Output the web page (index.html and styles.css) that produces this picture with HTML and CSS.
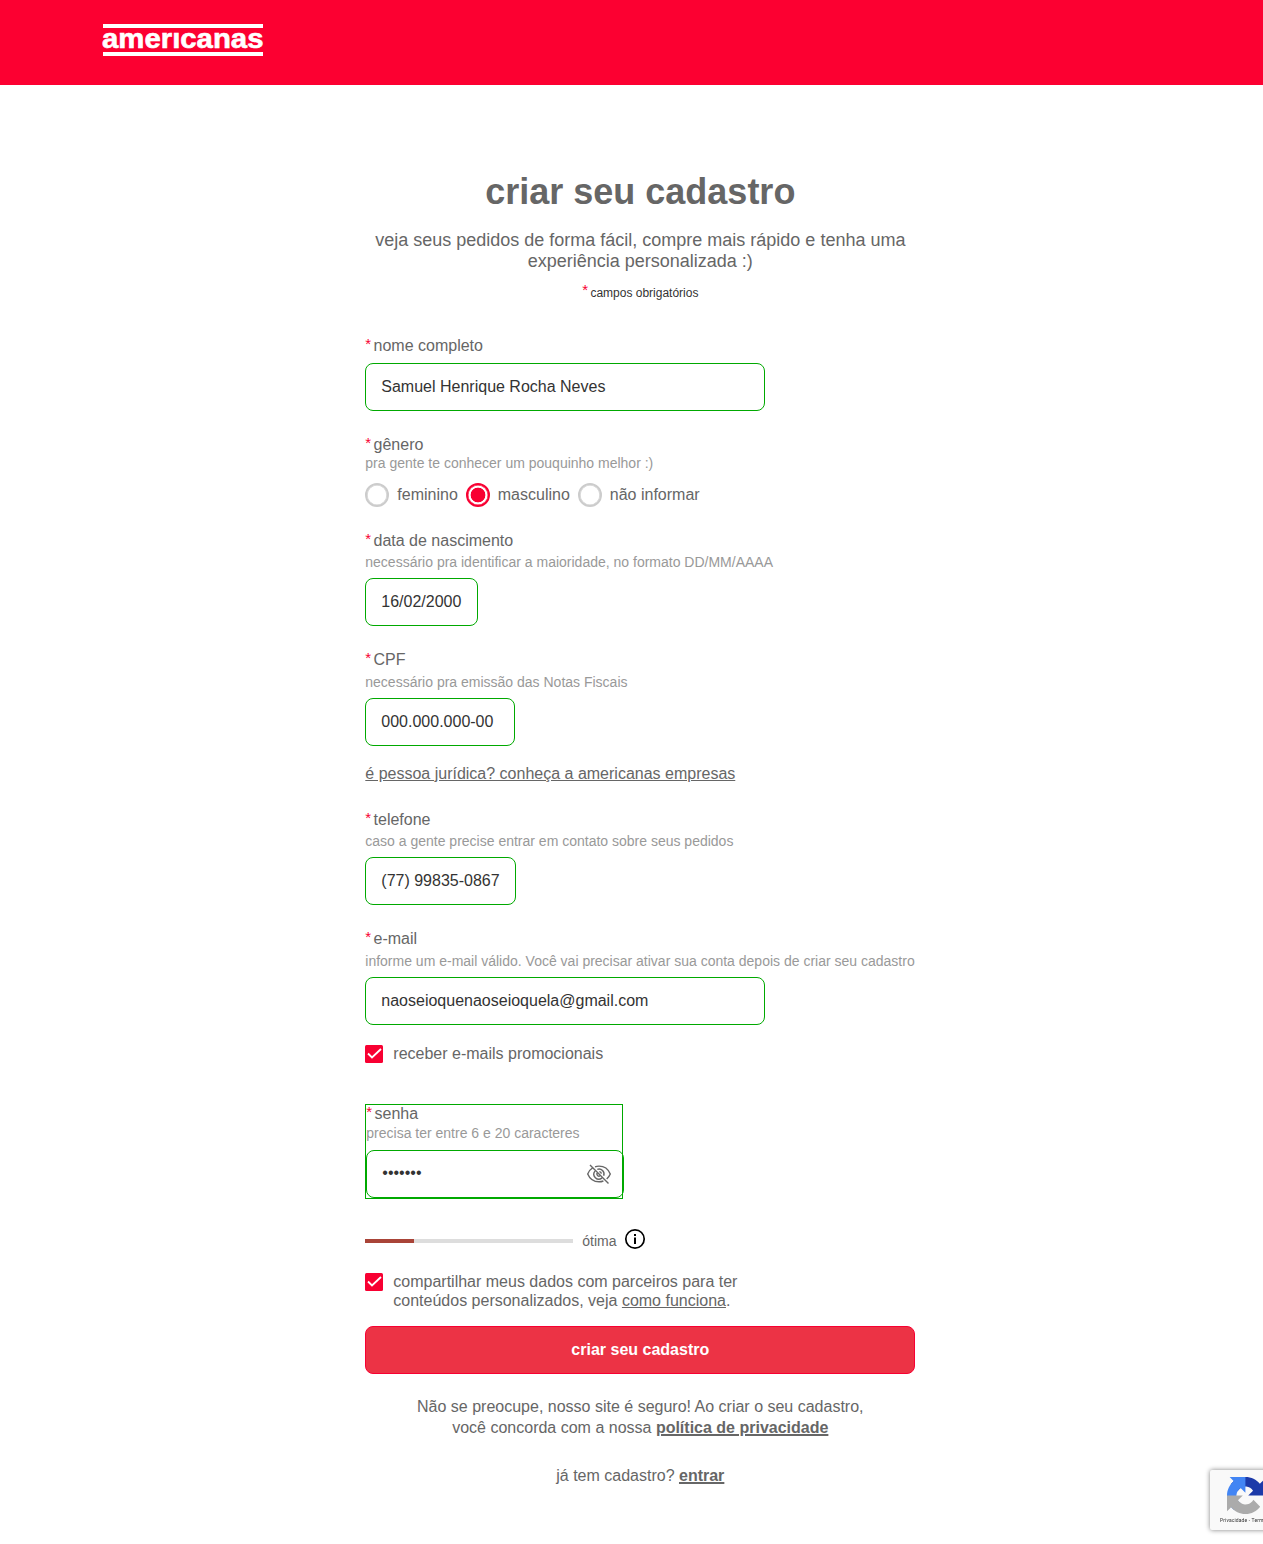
FILE: index.html
```html
<!DOCTYPE html>
<html lang="pt-BR">
<head>
<meta charset="utf-8">
<title>criar seu cadastro</title>
<link rel="stylesheet" href="styles.css">
</head>
<body>
<header class="header">
  <svg class="logo" width="164" height="32" viewBox="0 0 164 32">
    <path fill="#fff" d="M2 0h160v4H2zM2 28h160v4H2z"/>
    <text x="1" y="24.300" textLength="161.500" lengthAdjust="spacingAndGlyphs">amerıcanas</text>
  </svg>
</header>
<main class="main">
  <h1 class="title">criar seu cadastro</h1>
  <p class="lead">veja seus pedidos de forma fácil, compre mais rápido e tenha uma experiência personalizada :)</p>
  <p class="required-note"><span class="star">*</span><small>campos obrigatórios</small></p>
  <form class="form">
    <div class="field">
      <label class="label"><span class="star">*</span>nome completo</label>
      <input class="input w-full" type="text" value="Samuel Henrique Rocha Neves">
    </div>
    <div class="field">
      <div class="label"><span class="star">*</span>gênero</div>
      <div class="hint hint-gender">pra gente te conhecer um pouquinho melhor :)</div>
      <div class="radios">
        <label class="radio"><span class="dot"></span>feminino</label>
        <label class="radio"><span class="dot dot-on"></span>masculino</label>
        <label class="radio"><span class="dot"></span>não informar</label>
      </div>
    </div>
    <div class="field">
      <label class="label"><span class="star">*</span>data de nascimento</label>
      <div class="hint">necessário pra identificar a maioridade, no formato DD/MM/AAAA</div>
      <input class="input w-date" type="text" value="16/02/2000">
    </div>
    <div class="field">
      <label class="label"><span class="star">*</span>CPF</label>
      <div class="hint hint-low">necessário pra emissão das Notas Fiscais</div>
      <input class="input w-cpf" type="text" value="000.000.000-00">
    </div>
    <a class="company">é pessoa jurídica? conheça a americanas empresas</a>
    <div class="field field-phone">
      <label class="label"><span class="star">*</span>telefone</label>
      <div class="hint">caso a gente precise entrar em contato sobre seus pedidos</div>
      <input class="input w-phone" type="text" value="(77) 99835-0867">
    </div>
    <div class="field">
      <label class="label"><span class="star">*</span>e-mail</label>
      <div class="hint hint-low">informe um e-mail válido. Você vai precisar ativar sua conta depois de criar seu cadastro</div>
      <input class="input w-full" type="text" value="naoseioquenaoseioquela@gmail.com">
    </div>
    <label class="check check-promo">
      <svg class="box" width="18" height="18" viewBox="0 0 18 18"><rect width="18" height="18" rx="1.500" fill="#f80032"/><path d="M3 8.500l4 4 9-8.500" fill="none" stroke="#fff" stroke-width="1.800"/></svg>
      <span>receber e-mails promocionais</span>
    </label>
    <div class="password">
      <label class="label"><span class="star">*</span>senha</label>
      <div class="hint hint-password">precisa ter entre 6 e 20 caracteres</div>
      <div class="password-box">
        <input class="secret" type="password" value="1234567">
        <svg width="26" height="22" viewBox="0 0 26 22" fill="none" stroke="#666" stroke-width="1.400">
          <path d="M7 4.500C4.600 6 2.800 8.300 1.700 11c2 4.800 6.400 7.800 11.300 7.800 1.500 0 3-.3 4.400-.8M9 3.800c1.300-.5 2.600-.7 4-.7 4.900 0 9.300 3 11.300 7.900-.8 1.900-2 3.600-3.600 5"/>
          <path d="M8.900 8.100a5 5 0 0 0 7 7M11.300 6.300a5 5 0 0 1 6.400 6.400M10.900 10.200a2.400 2.400 0 0 0 2.900 2.900M13.300 8.600a2.400 2.400 0 0 1 2.100 2.100M4 2l18.500 18.500"/>
        </svg>
      </div>
    </div>
    <div class="strength">
      <div class="bar"><div class="bar-fill"></div></div>
      <span class="rating">ótima</span>
      <svg width="22" height="22" viewBox="0 0 22 22"><circle cx="11" cy="11" r="9.200" fill="none" stroke="#000" stroke-width="1.700"/><path d="M10 6h2v2h-2zM10 9.500h2V16h-2z"/></svg>
    </div>
    <label class="check check-share">
      <svg class="box" width="18" height="18" viewBox="0 0 18 18"><rect width="18" height="18" rx="1.500" fill="#f80032"/><path d="M3 8.500l4 4 9-8.500" fill="none" stroke="#fff" stroke-width="1.800"/></svg>
      <span class="share-text">compartilhar meus dados com parceiros para ter<br>conteúdos personalizados, veja <u>como funciona</u>.</span>
    </label>
    <button class="submit" type="button">criar seu cadastro</button>
  </form>
  <p class="terms">Não se preocupe, nosso site é seguro! Ao criar o seu cadastro,<br>você concorda com a nossa <a class="strong-link">política de privacidade</a></p>
  <p class="login">já tem cadastro? <a class="strong-link">entrar</a></p>
</main>
<aside class="captcha">
  <svg width="37" height="37" viewBox="0 0 64 64">
    <path fill="#1c3aa9" d="M64 31.955l-.033-1.370V4.687l-7.160 7.160C50.948 4.674 42.033.093 32.050.093c-10.400 0-19.622 4.960-25.458 12.640l11.736 11.860a15.550 15.550 0 0 1 4.754-5.334c2.050-1.600 4.952-2.906 8.968-2.906.485 0 .860.057 1.135.163 4.976.393 9.288 3.140 11.828 7.124l-8.307 8.307L64 31.953"/>
    <path fill="#4285f4" d="M31.862.094l-1.370.033H4.594l7.160 7.160C4.580 13.147 0 22.060 0 32.046c0 10.400 4.960 19.622 12.640 25.458L24.500 45.768a15.550 15.550 0 0 1-5.334-4.754c-1.600-2.050-2.906-4.952-2.906-8.968 0-.485.057-.860.163-1.135.393-4.976 3.140-9.288 7.124-11.828l8.307 8.307L31.860.095"/>
    <path fill="#ababab" d="M.001 32.045l.033 1.370v25.898l7.160-7.160c5.860 7.173 14.774 11.754 24.760 11.754 10.400 0 19.622-4.960 25.458-12.640l-11.736-11.860a15.550 15.550 0 0 1-4.754 5.334c-2.050 1.600-4.952 2.906-8.968 2.906-.485 0-.860-.057-1.135-.163-4.976-.393-9.288-3.140-11.828-7.124l8.307-8.307c-10.522.040-22.400.066-27.295-.005"/>
  </svg>
  <span>Privacidade&nbsp;-&nbsp;Termos</span>
</aside>
</body>
</html>
```
FILE: styles.css
```css
* { box-sizing: border-box; }
body {
  margin: 0;
  height: 1544px;
  overflow: hidden;
  background: #fff;
  color: #666;
  font: 16px/18px "Liberation Sans", Arial, sans-serif;
}
h1, p { margin: 0; }
.header {
  height: 85px;
  padding: 24px 0 0 101px;
  background: #fc0031;
}
.logo { display: block; }
.logo text {
  fill: #fff;
  stroke: #fff;
  stroke-width: 0.6px;
  font-size: 28px;
  font-weight: bold;
}
.main {
  width: 550px;
  margin-left: 365.3px;
  padding-top: 86px;
}
.title {
  font-size: 36px;
  line-height: 42px;
  text-align: center;
}
.lead {
  margin-top: 17px;
  font-size: 18px;
  line-height: 21px;
  text-align: center;
}
.required-note {
  height: 18px;
  margin-top: 11px;
  color: #333;
  text-align: center;
}
.required-note small { font-size: 12px; }
.form { margin-top: 36px; }
.star {
  margin-right: 2.400px;
  color: #f80032;
  font-size: 15px;
  line-height: 12px;
  vertical-align: 2px;
}
.field + .field { margin-top: 25px; }
.label {
  display: block;
  height: 18px;
}
.hint {
  margin: 4px 0 8px;
  color: #999;
  font-size: 14px;
  line-height: 16px;
  white-space: nowrap;
}
.hint-gender { margin: 1px 0 12px; }
.hint-low { margin-top: 5px; }
.input {
  display: block;
  height: 48px;
  padding: 0 15px 1px;
  border: 1px solid #00a900;
  border-radius: 8px;
  background: #fff;
  color: #333;
  font: inherit;
}
.label + .input { margin-top: 8px; }
.w-full { width: 400px; }
.w-date { width: 113px; }
.w-cpf { width: 150px; }
.w-phone { width: 151px; }
.radios { display: flex; gap: 8px; }
.radio {
  display: flex;
  gap: 8px;
  height: 24px;
  line-height: 23px;
}
.dot {
  width: 24px;
  height: 24px;
  border: 2px solid #ccc;
  border-radius: 50%;
  box-shadow: inset 0 0 0 0.600px #ccc;
}
.dot-on {
  border-color: #f80032;
  background: radial-gradient(circle, #f80032 7px, #fff 7.700px);
  box-shadow: inset 0 0 0 0.400px #f80032;
}
.company {
  display: block;
  margin-top: 19px;
  text-decoration: underline;
}
.field-phone { margin-top: 28px; }
.check {
  display: flex;
  gap: 10px;
}
.box { flex: none; }
.check-promo { margin-top: 20px; }
.password {
  width: 258px;
  height: 95px;
  margin-top: 41px;
  border: 1px solid #00a900;
}
.hint-password { margin: 2px 0 9px; }
.password-box {
  display: flex;
  align-items: center;
  width: 258px;
  height: 48px;
  padding: 0 11px 0 15px;
  border: 1px solid #00a900;
  border-radius: 8px;
}
.secret {
  flex: 1;
  min-width: 0;
  padding: 0 0 2px;
  border: 0;
  background: none;
  color: #333;
  font: inherit;
}
.strength {
  display: flex;
  align-items: center;
  height: 22px;
  margin-top: 29px;
}
.bar {
  width: 208px;
  height: 4px;
  margin: 4px 9px 0 0;
  background: #ddd;
}
.bar-fill {
  width: 49px;
  height: 4px;
  background: #a94438;
}
.rating {
  width: 42px;
  margin-top: 4px;
  font-size: 14px;
  line-height: 16px;
}
.check-share {
  height: 38px;
  margin-top: 23px;
  line-height: 19px;
}
.share-text { margin-top: -1px; }
.submit {
  display: block;
  width: 550px;
  height: 48px;
  margin-top: 15px;
  padding: 0 0 1px;
  border: 1px solid #f80032;
  border-radius: 8px;
  background: #ec3345;
  color: #fff;
  font: bold 16px/18px "Liberation Sans", Arial, sans-serif;
}
.terms {
  margin-top: 22px;
  line-height: 21px;
  text-align: center;
}
.strong-link {
  font-weight: bold;
  text-decoration: underline 2px;
}
.login {
  margin-top: 29px;
  text-align: center;
}
.captcha {
  position: fixed;
  top: 1470px;
  left: 1210px;
  width: 70px;
  height: 60px;
  padding: 7px 0 0 10px;
  border-radius: 2px;
  background: #f9f9f9;
  box-shadow: 0 0 5px #808080;
}
.captcha svg {
  display: block;
  margin-left: 7px;
}
.captcha span {
  display: block;
  margin-top: 2px;
  color: #333;
  font: 5px/8px Roboto, sans-serif;
  letter-spacing: 0.120px;
  white-space: nowrap;
}
```
